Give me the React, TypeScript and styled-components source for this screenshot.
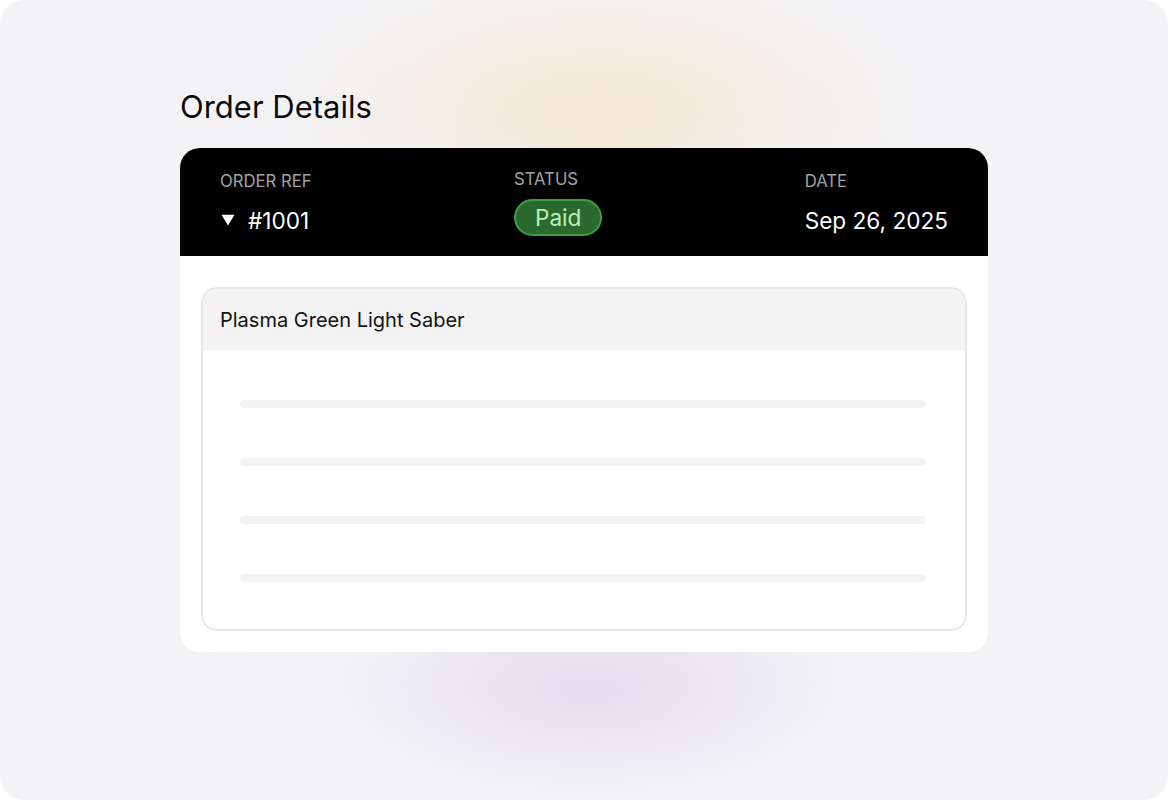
import React from 'react';
import styled, {createGlobalStyle} from "styled-components";

const GlobalStyle = createGlobalStyle`
  * {
    box-sizing: border-box;
  }
  body {
    margin: 0;
    background: #ffffff;
    font-family: Inter, "Noto Sans", sans-serif;
  }
`

type InfoColumnPropsType = {
    label: string
    gap: number
    children: React.ReactNode
}

const InfoColumn = (props: InfoColumnPropsType) => {
    return (
        <Column gap={props.gap}>
            <Label>{props.label}</Label>
            {props.children}
        </Column>
    );
};

const skeletonRows = [0, 1, 2, 3];

export default function App() {
    return (
        <>
            <GlobalStyle/>
            <Frame>
                <Content>
                    <Title>Order Details</Title>
                    <Card>
                        <CardHeader>
                            <InfoColumn label="Order Ref" gap={16}>
                                <Value>
                                    <Caret viewBox="0 0 14 12" aria-hidden="true">
                                        <path d="M0.5 0.8 H13.5 L7 11.4 Z" fill="#ffffff"/>
                                    </Caret>
                                    #1001
                                </Value>
                            </InfoColumn>
                            <InfoColumn label="Status" gap={10}>
                                <StatusPill>Paid</StatusPill>
                            </InfoColumn>
                            <InfoColumn label="Date" gap={16}>
                                <Value>Sep 26, 2025</Value>
                            </InfoColumn>
                        </CardHeader>
                        <CardBody>
                            <ItemBox>
                                <ItemHeader>Plasma Green Light Saber</ItemHeader>
                                <ItemBody>
                                    {skeletonRows.map((row) => (
                                        <SkeletonLine key={row}/>
                                    ))}
                                </ItemBody>
                            </ItemBox>
                        </CardBody>
                    </Card>
                </Content>
            </Frame>
        </>
    );
}

const Frame = styled.div`
  width: 1168px;
  height: 800px;
  border-radius: 24px;
  overflow: hidden;
  background:
    radial-gradient(ellipse 320px 150px at 600px 110px, rgba(244, 224, 190, 0.6), rgba(244, 224, 190, 0) 100%),
    radial-gradient(ellipse 260px 110px at 590px 690px, rgba(216, 204, 232, 0.6), rgba(216, 204, 232, 0) 100%),
    radial-gradient(ellipse 540px 360px at 584px 400px, rgba(232, 230, 236, 0.45), rgba(232, 230, 236, 0) 100%),
    #f4f4f6;
  display: flex;
  justify-content: center;
  padding-top: 88px;
`

const Content = styled.div`
  width: 808px;
  display: flex;
  flex-direction: column;
`

const Title = styled.h1`
  margin: 0 0 23px;
  font-size: 31px;
  line-height: 37px;
  font-weight: 400;
  color: #0b0b0b;
`

const Card = styled.section`
  background: #ffffff;
  border-radius: 20px;
  overflow: hidden;
`

const CardHeader = styled.header`
  height: 108px;
  background: #000000;
  padding: 0 40px;
  display: flex;
  justify-content: space-between;
  align-items: center;
`

const Column = styled.div<{ gap: number }>`
  display: flex;
  flex-direction: column;
  align-items: flex-start;
  gap: ${props => props.gap}px;
`

const Label = styled.span`
  font-size: 16.7px;
  line-height: 20px;
  text-transform: uppercase;
  color: #a3a3a3;
`

const Value = styled.div`
  display: flex;
  align-items: center;
  gap: 13px;
  font-size: 22.6px;
  line-height: 27px;
  color: #ffffff;
`

const Caret = styled.svg`
  width: 14px;
  height: 12px;
  margin-left: 1px;
`

const StatusPill = styled.span`
  height: 37px;
  padding: 0 19px;
  border: 2px solid #3c9d44;
  border-radius: 999px;
  background: #2a6a31;
  color: #b9f1b6;
  font-size: 22.6px;
  line-height: 33px;
`

const CardBody = styled.div`
  padding: 31px 21px 21px;
`

const ItemBox = styled.div`
  border: 2px solid #e7e7e9;
  border-radius: 16px;
  overflow: hidden;
`

const ItemHeader = styled.div`
  height: 61px;
  padding: 0 17px;
  display: flex;
  align-items: center;
  background: #f3f3f4;
  font-size: 20px;
  color: #111111;
`

const ItemBody = styled.div`
  padding: 50px 39px 47px 37px;
  display: flex;
  flex-direction: column;
  gap: 50px;
`

const SkeletonLine = styled.div`
  height: 8px;
  border-radius: 4px;
  background: #f3f3f4;
`
